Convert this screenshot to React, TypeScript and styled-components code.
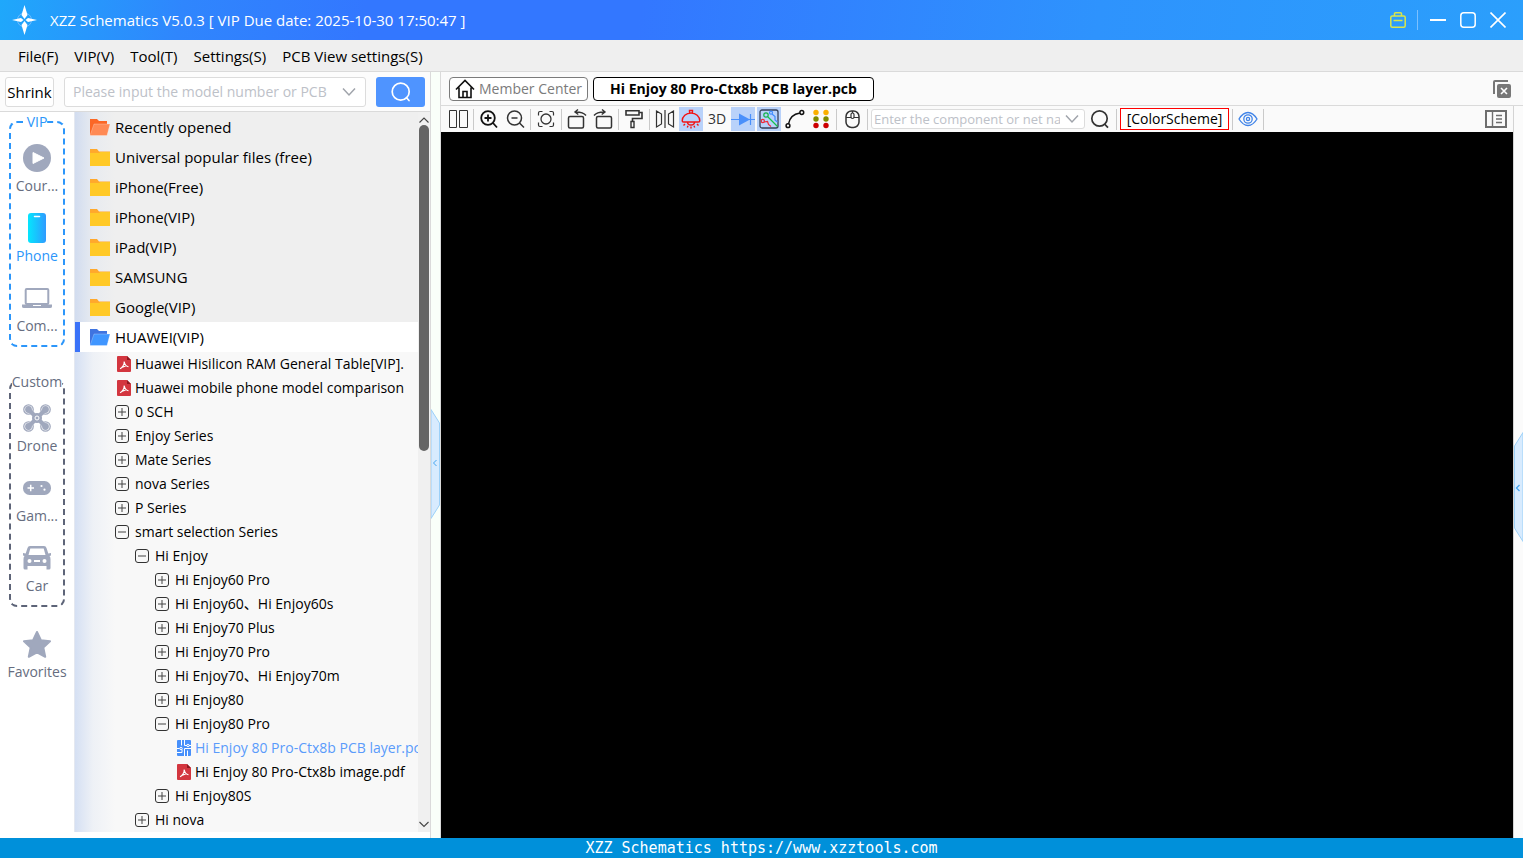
import React from "react";
import styled, { createGlobalStyle, css } from "styled-components";

const GlobalStyle = createGlobalStyle`
  * { box-sizing: border-box; }
  html, body, #root { height: 100%; }
  body {
    margin: 0;
    background: #fafafa;
    color: #000;
    font: 15px/20px "Open Sans", "Noto Sans CJK SC", sans-serif;
    overflow: hidden;
  }
  button, input { font: inherit; color: inherit; }
  button { border: 0; padding: 0; background: none; cursor: pointer; }
  svg { display: block; flex: none; }
`;

const Window = styled.div`
  display: flex;
  flex-direction: column;
  height: 100vh;
`;

/* ---------- title bar and menu ---------- */

const TitleBar = styled.header`
  display: flex;
  align-items: center;
  height: 40px;
  flex: none;
  padding: 0 13px 0 12px;
  color: #fff;
  background: linear-gradient(100deg, #1fa8fb 0%, #2f86fd 12%, #3377ff 24%, #3377ff 42%, #2e93fd 72%, #2b9ffc 100%);
`;

const Title = styled.h1`
  flex: 1;
  margin: 0 0 0 13px;
  font-size: 15px;
  font-weight: 400;
  white-space: nowrap;
`;

const WindowButtons = styled.div`
  display: flex;
  align-items: center;
  gap: 6px;
`;

const WindowButton = styled.button`
  display: grid;
  place-items: center;
  width: 24px;
  height: 24px;
`;

const TitleDivider = styled.span`
  width: 1px;
  height: 20px;
  margin: 0 2px 0 1px;
  background: #7cc0ff;
`;

const MenuBar = styled.nav`
  display: flex;
  align-items: center;
  gap: 16px;
  height: 32px;
  flex: none;
  padding: 1px 18px 0;
  background: #efefef;
  border-bottom: 1px solid #dadada;
`;

const MenuItem = styled.button`
  white-space: nowrap;
`;

/* ---------- main split ---------- */

const Main = styled.main`
  display: flex;
  flex: 1;
  min-height: 0;
`;

const LeftPanel = styled.section`
  display: flex;
  flex-direction: column;
  width: 431px;
  flex: none;
  padding-bottom: 6px;
  background: #fff;
  border-right: 1px solid #dadada;
`;

const SearchRow = styled.form`
  display: flex;
  align-items: center;
  height: 40px;
  flex: none;
  padding: 0 5px;
  background: #fcfcfc;
  border-bottom: 1px solid #dadada;
`;

const ShrinkButton = styled.button`
  width: 49px;
  height: 30px;
  background: #fff;
  border: 1px solid #dcdcdc;
  border-radius: 3px;
`;

const Combo = styled.div<{ $compact?: boolean }>`
  display: flex;
  align-items: center;
  background: #fff;
  border: 1px solid #dcdcdc;
  border-radius: 3px;
  ${(p) =>
    p.$compact
      ? css`
          width: 214px;
          height: 20px;
          padding: 0 5px 0 2px;
          font-size: 13px;
        `
      : css`
          flex: 1;
          height: 30px;
          margin: 0 10px;
          padding: 0 9px 0 8px;
          font-size: 14px;
        `}
`;

const ComboInput = styled.input`
  flex: 1;
  min-width: 0;
  height: 18px;
  padding: 0;
  border: 0;
  outline: 0;
  background: none;
  &::placeholder { color: #bdc1c8; opacity: 1; }
`;

const ComboArrow = styled.button`
  margin-left: 5px;
`;

const SearchButton = styled.button`
  display: grid;
  place-items: center;
  width: 49px;
  height: 30px;
  background: #4f94ff;
  border-radius: 3px;
`;

const Browser = styled.div`
  display: flex;
  flex: 1;
  min-height: 0;
`;

/* ---------- category rail ---------- */

const Rail = styled.aside`
  display: flex;
  flex-direction: column;
  align-items: center;
  width: 75px;
  flex: none;
  color: #666d80;
  border-right: 1px solid #e4e8f0;
  font-size: 14px;
`;

const RailGroup = styled.fieldset<{ $tone: string; $gap: number }>`
  width: 56px;
  min-width: 0;
  margin: 0 0 ${(p) => p.$gap}px;
  padding: 0;
  border: 2px dashed ${(p) => p.$tone};
  border-radius: 8px;
`;

const RailLegend = styled.legend<{ $color: string }>`
  margin: 0 auto;
  padding: 0;
  color: ${(p) => p.$color};
  white-space: nowrap;
`;

const RailList = styled.div`
  display: flex;
  flex-direction: column;
  align-items: center;
  gap: 14px;
  padding: 8px 0 9px;
`;

const RailItem = styled.button<{ $active?: boolean }>`
  display: flex;
  flex-direction: column;
  align-items: center;
  width: 52px;
  height: 56px;
  color: ${(p) => (p.$active ? "#2c96fa" : "inherit")};
  white-space: nowrap;
`;

const RailIcon = styled.span`
  display: grid;
  place-items: center;
  height: 36px;
  color: #a0a8bd;
`;

/* ---------- file tree ---------- */

const shade =
  "linear-gradient(90deg, rgba(190, 208, 240, 0.6), rgba(215, 225, 242, 0.3) 18px, rgba(240, 240, 240, 0) 40px)";

const Tree = styled.div`
  flex: 1;
  min-width: 0;
  overflow: hidden;
  background: ${shade}, #f8f8f8;
`;

const FolderRow = styled.button<{ $open?: boolean }>`
  display: flex;
  align-items: center;
  gap: 5px;
  width: 100%;
  height: 30px;
  padding-left: ${(p) => (p.$open ? 10 : 15)}px;
  background: ${(p) => (p.$open ? "#fff" : `${shade}, #efefef`)};
  border-left: ${(p) => (p.$open ? "5px solid #3a72f8" : "0")};
  white-space: nowrap;
`;

const NodeRow = styled.button<{ $level: number; $active?: boolean }>`
  display: flex;
  align-items: center;
  gap: 4px;
  width: 100%;
  height: 24px;
  padding-left: ${(p) => 40 + p.$level * 20}px;
  color: ${(p) => (p.$active ? "#5a9bfb" : "inherit")};
  font-size: 14px;
  white-space: nowrap;
`;

const NodeIcon = styled.span<{ $file: boolean }>`
  display: flex;
  justify-content: ${(p) => (p.$file ? "flex-end" : "flex-start")};
  width: 16px;
  flex: none;
`;

const ScrollBar = styled.div`
  display: flex;
  flex-direction: column;
  align-items: flex-end;
  width: 12px;
  flex: none;
  padding: 3px 1px 3px 0;
  background: #f0f0f0;
`;

const ScrollTrack = styled.div`
  flex: 1;
  width: 10px;
`;

const ScrollThumb = styled.div`
  height: 47%;
  background: #646464;
  border-radius: 5px;
`;

/* ---------- workspace ---------- */

const Gutter = styled.div<{ $shift: number }>`
  display: flex;
  align-items: center;
  width: 9px;
  flex: none;
  padding-top: ${(p) => p.$shift}px;
  background: #f9fff9;
`;

const RightGutter = styled(Gutter)`
  width: 10px;
  background: #fbfbfb;
  border-left: 1px solid #d4d4d4;
`;

const Workspace = styled.section`
  display: flex;
  flex-direction: column;
  flex: 1;
  min-width: 0;
  border-left: 1px solid #dadada;
`;

const Tabs = styled.div`
  display: flex;
  align-items: center;
  gap: 5px;
  height: 34px;
  flex: none;
  padding: 0 12px 0 8px;
  border-bottom: 1px solid #dadada;
`;

const Tab = styled.button<{ $active?: boolean }>`
  display: flex;
  align-items: center;
  gap: 4px;
  height: 24px;
  padding: ${(p) => (p.$active ? "0 16px" : "0 5px")};
  color: ${(p) => (p.$active ? "#000" : "#7b7b7b")};
  font-size: 14px;
  font-weight: ${(p) => (p.$active ? 700 : 400)};
  background: #fff;
  border: 1px solid ${(p) => (p.$active ? "#000" : "#7b7b7b")};
  border-radius: 4px;
  white-space: nowrap;
`;

const Spacer = styled.span`
  flex: 1;
`;

const View = styled.div`
  display: flex;
  flex: 1;
  min-height: 0;
`;

const ViewColumn = styled.div`
  display: flex;
  flex-direction: column;
  flex: 1;
  min-width: 0;
`;

const ToolBar = styled.div`
  display: flex;
  align-items: center;
  gap: 2px;
  height: 26px;
  flex: none;
  padding: 0 5px;
`;

const Tool = styled.button<{ $on?: boolean; $wide?: boolean }>`
  display: grid;
  place-items: center;
  width: ${(p) => (p.$wide ? 26 : 24)}px;
  height: 24px;
  flex: none;
  color: #333;
  font-size: 14px;
  background: ${(p) => (p.$on ? "#b9d2fa" : "none")};
`;

const ToolDivider = styled.span`
  width: 1px;
  height: 21px;
  margin: 0 1px;
  background: #cacaca;
`;

const SchemeButton = styled.button`
  height: 22px;
  width: 109px;
  font-size: 14px;
  background: #fff;
  border: 1px solid #f00;
  white-space: nowrap;
`;

const Board = styled.div`
  flex: 1;
  background: #000;
`;

const Footer = styled.footer`
  height: 20px;
  flex: none;
  color: #fff;
  background: #0090da;
  text-align: center;
  font: 15px/20px "DejaVu Sans Mono", monospace;
  white-space: pre;
`;

/* ---------- drawings ---------- */

const Logo = () => (
  <svg width="25" height="30" viewBox="0 0 25 30">
    <circle cx="12.5" cy="15" r="7" fill="none" stroke="#6fbcff" strokeWidth="1" />
    <path d="M12.5 0 15.5 10 12.5 14 9.5 10ZM12.5 30 15.5 20 12.5 16 9.5 20ZM0 15 9 13 11.5 15 9 17ZM25 15 16 13 13.5 15 16 17Z" fill="#fff" />
  </svg>
);

const Chevron = () => (
  <svg width="14" height="10" viewBox="0 0 14 10" fill="none" stroke="#a0a4ab" strokeWidth="1.500">
    <path d="M1 1.500 7 8 13 1.500" />
  </svg>
);

const ScrollArrow = ({ up }: { up?: boolean }) => (
  <svg width="10" height="10" viewBox="0 0 10 10" fill="none" stroke="#444" strokeWidth="1.100">
    <path d={up ? "M.500 7.500 5 3 9.500 7.500" : "M.500 3 5 7.500 9.500 3"} />
  </svg>
);

const Magnifier = () => (
  <svg width="20" height="20" viewBox="0 0 20 20" fill="none" stroke="currentColor" strokeWidth="1.700">
    <circle cx="9.500" cy="9.500" r="7.700" />
    <path d="M14.500 15 18 18.700" />
  </svg>
);

const Folder = () => (
  <svg width="20" height="17" viewBox="0 0 20 17">
    <path d="M0 0H7L9 2.500H20V8H0Z" fill="#ffa92c" />
    <path d="M0 4H9L10.500 3H20V17H0Z" fill="#ffc927" />
  </svg>
);

const OpenFolder = ({ back, front }: { back: string; front: string }) => (
  <svg width="20" height="17" viewBox="0 0 20 17">
    <path d="M0 0H7L9 2H17V8L1 16H0Z" fill={back} />
    <path d="M4 5H20L17 16.500H0Z" fill={front} stroke="#fff" strokeOpacity=".5" strokeWidth=".5" />
  </svg>
);

const Pdf = () => (
  <svg width="14" height="16" viewBox="0 0 14 16">
    <path d="M1 0H10L14 4V15Q14 16 13 16H1Q0 16 0 15V1Q0 0 1 0Z" fill="#d3363f" />
    <path d="M10 0 14 4H10Z" fill="#8d1820" />
    <path d="M7.200 5.500C7.800 8.500 9 10.500 11.500 10.700M7.200 5.500C7.400 9 5 12 3 12.700M4.700 11.400 8.700 9.900" fill="none" stroke="#fff" strokeWidth="1.100" />
  </svg>
);

const Pcb = () => (
  <svg width="14" height="16" viewBox="0 0 14 16">
    <rect width="14" height="16" rx="1" fill="#4790fb" />
    <g fill="none" stroke="#fff" strokeWidth="1">
      <path d="M4.500 0V5.500M7.500 0V5.500H10M14 5.500H12M0 8.500H2.500M5 9.500V12.500H0M7.500 16V8.500H14M10.500 16V10.500" />
      <circle cx="11" cy="5.500" r="1.200" />
      <circle cx="4" cy="8.500" r="1.200" />
    </g>
  </svg>
);

const Toggle = ({ open }: { open?: boolean }) => (
  <svg width="14" height="14" viewBox="0 0 14 14" fill="none">
    <rect x=".5" y=".5" width="13" height="13" rx="2.500" stroke="#333" />
    <path d="M3 7H11" stroke="#444" />
    {!open && <path d="M7 3V11" stroke="#444" />}
  </svg>
);

const railIcons: Record<string, React.ReactNode> = {
  course: (
    <svg width="28" height="28" viewBox="0 0 28 28">
      <circle cx="14" cy="14" r="14" fill="currentColor" />
      <path d="M10 8.500 21 14 10 19.500Z" fill="#fff" stroke="#fff" strokeLinejoin="round" />
    </svg>
  ),
  phone: (
    <svg width="18" height="30" viewBox="0 0 18 30">
      <defs>
        <linearGradient id="phone" x1="0" y1="0" x2="1" y2="0">
          <stop offset="0" stopColor="#05e6fd" />
          <stop offset="1" stopColor="#2f9bff" />
        </linearGradient>
      </defs>
      <rect width="18" height="30" rx="3" fill="url(#phone)" />
      <path d="M6.500 3.500H11.500" stroke="#fff" strokeWidth="1.500" strokeLinecap="round" />
    </svg>
  ),
  computer: (
    <svg width="30" height="20" viewBox="0 0 30 20">
      <rect x="3.700" y="1" width="22.600" height="15" rx="1" fill="none" stroke="currentColor" strokeWidth="2" />
      <path d="M0 16.500H11V18H19V16.500H30V18.500Q30 20 28 20H2Q0 20 0 18.500Z" fill="currentColor" />
    </svg>
  ),
  drone: (
    <svg width="28" height="28" viewBox="0 0 28 28" fill="none" stroke="currentColor">
      {[[5.500, 5.500], [22.500, 5.500], [5.500, 22.500], [22.500, 22.500]].map(([x, y]) => (
        <circle key={`${x}-${y}`} cx={x} cy={y} r="4.700" strokeWidth="1.300" />
      ))}
      <path d="M6 6 22 22M22 6 6 22" strokeWidth="4" strokeLinecap="round" />
      {[[5.500, 5.500], [22.500, 5.500], [5.500, 22.500], [22.500, 22.500]].map(([x, y]) => (
        <circle key={`${x}-${y}`} cx={x} cy={y} r="3.400" fill="currentColor" stroke="none" />
      ))}
      <circle cx="14" cy="14" r="4.500" fill="currentColor" />
      <circle cx="14" cy="14" r="2" stroke="#fff" />
    </svg>
  ),
  game: (
    <svg width="28" height="14" viewBox="0 0 28 14">
      <rect width="28" height="14" rx="6.500" fill="currentColor" />
      <path d="M4.500 7H11M7.700 3.700V10.300" stroke="#fff" strokeWidth="1.500" />
      <circle cx="18.500" cy="5" r="1.100" fill="#fff" />
      <circle cx="21.500" cy="8.700" r="1.100" fill="#fff" />
    </svg>
  ),
  car: (
    <svg width="28" height="24" viewBox="0 0 28 24">
      <path d="M7 0H21Q23 0 23.500 2L25.300 7.500 28 7V9.500L26.500 10Q27.500 11 27.500 13V22Q27.500 23.500 26 23.500H23.500V20H4.500V23.500H2Q.500 23.500 .500 22V13Q.500 11 1.500 10L0 9.500V7L2.700 7.500 4.500 2Q5 0 7 0ZM7.300 2.500 5.500 9H22.500L20.700 2.500Z" fill="currentColor" />
      <circle cx="6.500" cy="15" r="2" fill="#fff" />
      <circle cx="21.500" cy="15" r="2" fill="#fff" />
      <rect x="11" y="14" width="6" height="2" fill="#fff" />
    </svg>
  ),
  star: (
    <svg width="28" height="27" viewBox="0 0 28 27">
      <path d="M14 1 17.900 9.300 27 10.300 20.300 16.500 22.200 25.800 14 21.300 5.800 25.800 7.700 16.500 1 10.300 10.100 9.300Z" fill="currentColor" stroke="currentColor" strokeWidth="2" strokeLinejoin="round" />
    </svg>
  ),
};

const Glyph = ({ children }: { children: React.ReactNode }) => (
  <svg width="20" height="20" viewBox="0 0 20 20" fill="none" stroke="currentColor" strokeWidth="1.500">
    {children}
  </svg>
);

const glyphs: Record<string, React.ReactNode> = {
  split: (
    <Glyph>
      <path d="M1.500 1.500H8.500V18.500H1.500ZM11.500 1.500H19.500V18.500H11.500Z" strokeWidth="1" />
    </Glyph>
  ),
  zoomIn: (
    <Glyph>
      <g stroke="#111" strokeWidth="1.800">
        <circle cx="9" cy="9" r="6.800" />
        <path d="M14 14 18 18.500M5.500 9H12.500M9 5.500V12.500" />
      </g>
    </Glyph>
  ),
  zoomOut: (
    <Glyph>
      <circle cx="9.500" cy="9" r="7" />
      <path d="M14.500 14 19 18.500M6.500 9H12.500" />
    </Glyph>
  ),
  fit: (
    <Glyph>
      <path d="M2.500 6.500V4Q2.500 2.500 4 2.500H6.500M13.500 2.500H16Q17.500 2.500 17.500 4V6.500M17.500 13.500V16Q17.500 17.500 16 17.500H13.500M6.500 17.500H4Q2.500 17.500 2.500 16V13.500" strokeWidth="1.200" />
      <circle cx="10" cy="10" r="5" strokeWidth="1.300" />
    </Glyph>
  ),
  rotateLeft: (
    <Glyph>
      <rect x="1.500" y="7.500" width="15" height="11.500" rx="1.500" />
      <path d="M19 6.500Q16 2.700 8 3M11 .500 8 3 11.300 5.500" strokeWidth="1.400" />
    </Glyph>
  ),
  rotateRight: (
    <Glyph>
      <rect x="3.500" y="7.500" width="15" height="11.500" rx="1.500" />
      <path d="M1 6.500Q4 2.700 12 3M9 .500 12 3 8.700 5.500" strokeWidth="1.400" />
    </Glyph>
  ),
  roller: (
    <Glyph>
      <path d="M2 1.700H15V6H2ZM15 3.500H18V9.500H8.500V12" strokeWidth="1.600" />
      <path d="M7 12.500H10V18.500H7Z" strokeWidth="1.400" />
    </Glyph>
  ),
  mirror: (
    <Glyph>
      <path d="M1.500 2 6.500 5V15L1.500 18ZM18.500 2 13.500 5V15L18.500 18ZM10 1V19" strokeWidth="1.200" />
    </Glyph>
  ),
  lamp: (
    <Glyph>
      <g stroke="#f21313" strokeWidth="1.400">
        <path d="M1.200 12A8.800 8 0 0 1 18.800 12Q18.500 13 17 13H3Q1.500 13 1.200 12ZM8.500 4V1.500H11.500V4M6.500 13A3.500 3 0 0 0 13.500 13M4 15 2.500 16.500M7 16.800 6.300 18.500M10 17.500V19.500M13 16.800 13.700 18.500M16 15 17.500 16.500" />
      </g>
    </Glyph>
  ),
  diode: (
    <svg width="24" height="20" viewBox="0 0 24 20" fill="#4a90fb" stroke="#4a90fb">
      <path d="M0 10.500H24M19.500 5V16" fill="none" strokeWidth="1.200" />
      <path d="M8 4.500 19 10.500 8 16.500Z" stroke="none" />
    </svg>
  ),
  net: (
    <Glyph>
      <rect x="1" y="1" width="18" height="18" rx="2" stroke="#35405a" strokeWidth="1.300" />
      <g strokeWidth="1.200">
        <circle cx="7" cy="6" r="2.200" stroke="#16b14b" />
        <path d="M8.500 7.500 18.500 17.500" stroke="#16c14b" />
        <path d="M13 5 16 7.500V11L18.500 13" stroke="#3f8cff" />
        <circle cx="12" cy="3.700" r="1.500" stroke="#3f8cff" />
        <path d="M5 13 8.500 12.500 9.500 15.500 12 17.500" stroke="#f02a3a" />
        <circle cx="3.800" cy="12" r="1.600" stroke="#f02a3a" />
      </g>
    </Glyph>
  ),
  curve: (
    <Glyph>
      <path d="M3.500 15Q5 5.500 15 4" stroke="#111" />
      <circle cx="3" cy="16.700" r="1.900" stroke="#111" fill="#fff" />
      <circle cx="16.800" cy="3.500" r="1.900" stroke="#111" fill="#fff" />
    </Glyph>
  ),
  dots: (
    <svg width="20" height="20" viewBox="0 0 20 20">
      {["#fbb000", "#7f8c00", "#cc0000"].map((c, i) => (
        <g key={c} fill={c}>
          <circle cx="5" cy={3.500 + i * 6.500} r="2.700" />
          <circle cx="15" cy={3.500 + i * 6.500} r="2.700" />
        </g>
      ))}
    </svg>
  ),
  mouse: (
    <Glyph>
      <rect x="4" y="2" width="13" height="16.500" rx="5.500" />
      <path d="M4 8.500H17M10.500 2V4" strokeWidth="1.200" />
      <rect x="9" y="4" width="3" height="5.500" rx="1.500" fill="#fff" strokeWidth="1.200" />
    </Glyph>
  ),
  eye: (
    <Glyph>
      <g stroke="#3f83e8" strokeWidth="1.300">
        <path d="M1 10Q5 3.500 10 3.500T19 10Q15 16.500 10 16.500T1 10Z" />
        <circle cx="10" cy="10" r="4.200" />
        <circle cx="10" cy="10" r="1.600" />
      </g>
    </Glyph>
  ),
  panel: (
    <svg width="22" height="18" viewBox="0 0 22 18" fill="none" stroke="#6e6e6e">
      <rect x="1" y="1" width="20" height="16" strokeWidth="2" />
      <path d="M7.500 1V17" strokeWidth="1.400" />
      <path d="M11 5.500H17M11 9H17M11 12.500H17" strokeWidth="1.400" />
    </svg>
  ),
};

const CollapseLeft = () => (
  <svg width="9" height="110" viewBox="0 0 9 110">
    <path d="M0 .500 8.500 14V96L0 109.500Z" fill="#d8ebfe" stroke="#9bd0f8" />
    <path d="M5.500 51 2.500 54 5.500 57" fill="none" stroke="#45a5f0" />
  </svg>
);

const CollapseRight = () => (
  <svg width="9" height="110" viewBox="0 0 9 110">
    <path d="M9 .500 .500 14V96L9 109.500Z" fill="#d8ebfe" stroke="#9bd0f8" />
    <path d="M5.500 53 2.500 56 5.500 59" fill="none" stroke="#45a5f0" strokeWidth="1.300" />
  </svg>
);

/* ---------- data ---------- */

const menus = ["File(F)", "VIP(V)", "Tool(T)", "Settings(S)", "PCB View settings(S)"];

const folders = [
  "Universal popular files (free)",
  "iPhone(Free)",
  "iPhone(VIP)",
  "iPad(VIP)",
  "SAMSUNG",
  "Google(VIP)",
];

type Node = { kind: "plus" | "minus" | "pdf" | "pcb"; level: number; label: string };

const nodes: Node[] = [
  { kind: "pdf", level: 0, label: "Huawei Hisilicon RAM General Table[VIP]." },
  { kind: "pdf", level: 0, label: "Huawei mobile phone model comparison" },
  { kind: "plus", level: 0, label: "0 SCH" },
  { kind: "plus", level: 0, label: "Enjoy Series" },
  { kind: "plus", level: 0, label: "Mate Series" },
  { kind: "plus", level: 0, label: "nova Series" },
  { kind: "plus", level: 0, label: "P Series" },
  { kind: "minus", level: 0, label: "smart selection Series" },
  { kind: "minus", level: 1, label: "Hi Enjoy" },
  { kind: "plus", level: 2, label: "Hi Enjoy60 Pro" },
  { kind: "plus", level: 2, label: "Hi Enjoy60、Hi Enjoy60s" },
  { kind: "plus", level: 2, label: "Hi Enjoy70 Plus" },
  { kind: "plus", level: 2, label: "Hi Enjoy70 Pro" },
  { kind: "plus", level: 2, label: "Hi Enjoy70、Hi Enjoy70m" },
  { kind: "plus", level: 2, label: "Hi Enjoy80" },
  { kind: "minus", level: 2, label: "Hi Enjoy80 Pro" },
  { kind: "pcb", level: 3, label: "Hi Enjoy 80 Pro-Ctx8b PCB layer.pcb" },
  { kind: "pdf", level: 3, label: "Hi Enjoy 80 Pro-Ctx8b image.pdf" },
  { kind: "plus", level: 2, label: "Hi Enjoy80S" },
  { kind: "plus", level: 1, label: "Hi nova" },
];

const toolGroups: { name: string; label: string; on?: boolean }[][] = [
  [{ name: "split", label: "Split view" }],
  [{ name: "zoomIn", label: "Zoom in" }, { name: "zoomOut", label: "Zoom out" }],
  [{ name: "fit", label: "Fit" }],
  [{ name: "rotateLeft", label: "Rotate left" }, { name: "rotateRight", label: "Rotate right" }],
  [{ name: "roller", label: "Paint" }],
  [
    { name: "mirror", label: "Mirror" },
    { name: "lamp", label: "Highlight", on: true },
    { name: "3D", label: "3D" },
    { name: "diode", label: "Diode values", on: true },
    { name: "net", label: "Nets", on: true },
    { name: "curve", label: "Trace" },
    { name: "dots", label: "Pads" },
  ],
  [{ name: "mouse", label: "Mouse" }],
];

const RailEntry = ({ icon, label, active }: { icon: string; label: string; active?: boolean }) => (
  <RailItem type="button" $active={active}>
    <RailIcon>{railIcons[icon]}</RailIcon>
    {label}
  </RailItem>
);

const nodeIcon = (kind: Node["kind"]) => {
  if (kind === "pdf") return <Pdf />;
  if (kind === "pcb") return <Pcb />;
  return <Toggle open={kind === "minus"} />;
};

export default function App() {
  return (
    <Window>
      <GlobalStyle />
      <TitleBar>
        <Logo />
        <Title>XZZ Schematics V5.0.3 [ VIP Due date: 2025-10-30 17:50:47 ]</Title>
        <WindowButtons>
          <WindowButton aria-label="License">
            <svg width="16" height="16" viewBox="0 0 16 16" fill="none" stroke="#d9e64a" strokeWidth="1.500">
              <rect x=".800" y="4" width="14.400" height="11.200" rx="1.500" />
              <path d="M4.500 4V1.700Q4.500 .800 5.500 .800H10.500Q11.500 .800 11.500 1.700V4M3.500 8.500H12.500" />
            </svg>
          </WindowButton>
          <TitleDivider />
          <WindowButton aria-label="Minimize">
            <svg width="16" height="16" viewBox="0 0 16 16"><path d="M0 8H16" stroke="#fff" strokeWidth="2" /></svg>
          </WindowButton>
          <WindowButton aria-label="Maximize">
            <svg width="16" height="16" viewBox="0 0 16 16"><rect x=".800" y=".800" width="14.400" height="14.400" rx="3" fill="none" stroke="#fff" strokeWidth="1.500" /></svg>
          </WindowButton>
          <WindowButton aria-label="Close">
            <svg width="16" height="16" viewBox="0 0 16 16"><path d="M.500 .500 15.500 15.500M15.500 .500 .500 15.500" stroke="#fff" strokeWidth="1.600" /></svg>
          </WindowButton>
        </WindowButtons>
      </TitleBar>

      <MenuBar>
        {menus.map((m) => (
          <MenuItem key={m}>{m}</MenuItem>
        ))}
      </MenuBar>

      <Main>
        <LeftPanel>
          <SearchRow>
            <ShrinkButton type="button">Shrink</ShrinkButton>
            <Combo>
              <ComboInput aria-label="Model search" placeholder="Please input the model number or PCB" />
              <ComboArrow type="button" aria-label="Show history">
                <Chevron />
              </ComboArrow>
            </Combo>
            <SearchButton type="button" aria-label="Search">
              <svg width="20" height="20" viewBox="0 0 20 20" fill="none" stroke="#fff" strokeWidth="1.700">
                <circle cx="9.700" cy="9.700" r="8.500" />
                <path d="M15.500 15.700 18 18.500" strokeLinecap="round" />
              </svg>
            </SearchButton>
          </SearchRow>

          <Browser>
            <Rail>
              <RailGroup $tone="#2c96fa" $gap={25}>
                <RailLegend $color="#2c96fa">VIP</RailLegend>
                <RailList>
                  <RailEntry icon="course" label="Cour..." />
                  <RailEntry icon="phone" label="Phone" active />
                  <RailEntry icon="computer" label="Com..." />
                </RailList>
              </RailGroup>
              <RailGroup $tone="#5d6478" $gap={19}>
                <RailLegend $color="#666d80">Custom</RailLegend>
                <RailList>
                  <RailEntry icon="drone" label="Drone" />
                  <RailEntry icon="game" label="Gam..." />
                  <RailEntry icon="car" label="Car" />
                </RailList>
              </RailGroup>
              <RailEntry icon="star" label="Favorites" />
            </Rail>

            <Tree>
              <FolderRow>
                <OpenFolder back="#fb6726" front="#ff8a55" />
                Recently opened
              </FolderRow>
              {folders.map((f) => (
                <FolderRow key={f}>
                  <Folder />
                  {f}
                </FolderRow>
              ))}
              <FolderRow $open>
                <OpenFolder back="#3f74e0" front="#4096ff" />
                HUAWEI(VIP)
              </FolderRow>
              {nodes.map((n) => (
                <NodeRow key={n.label} $level={n.level} $active={n.kind === "pcb"}>
                  <NodeIcon $file={n.kind === "pdf" || n.kind === "pcb"}>{nodeIcon(n.kind)}</NodeIcon>
                  {n.label}
                </NodeRow>
              ))}
            </Tree>
            <ScrollBar>
              <ScrollArrow up />
              <ScrollTrack>
                <ScrollThumb />
              </ScrollTrack>
              <ScrollArrow />
            </ScrollBar>
          </Browser>
        </LeftPanel>

        <Gutter $shift={18}>
          <CollapseLeft />
        </Gutter>

        <Workspace>
          <Tabs>
            <Tab>
              <svg width="20" height="20" viewBox="0 0 20 20" fill="none" stroke="#111" strokeWidth="1.600">
                <path d="M1 10.500 10 1.500 19 10.500M4 8.500V18.500H16V8.500M8 18.500V12.500H12V18.500" />
              </svg>
              Member Center
            </Tab>
            <Tab $active>Hi Enjoy 80 Pro-Ctx8b PCB layer.pcb</Tab>
            <Spacer />
            <button aria-label="Close all">
              <svg width="18" height="18" viewBox="0 0 18 18">
                <path d="M1 14V2Q1 1 2 1H15" fill="none" stroke="#777" strokeWidth="2" />
                <rect x="4" y="4" width="14" height="14" rx="2" fill="#777" />
                <path d="M8 8 14 14M14 8 8 14" stroke="#fff" strokeWidth="1.600" />
              </svg>
            </button>
          </Tabs>
          <View>
            <ViewColumn>
              <ToolBar>
                {toolGroups.map((group, i) => (
                  <React.Fragment key={i}>
                    {group.map((t) => (
                      <Tool key={t.name} $on={t.on} aria-label={t.label}>
                        {glyphs[t.name] ?? t.name}
                      </Tool>
                    ))}
                    <ToolDivider />
                  </React.Fragment>
                ))}
                <Combo $compact>
                  <ComboInput aria-label="Component search" placeholder="Enter the component or net name" />
                  <ComboArrow type="button" aria-label="Show history">
                    <Chevron />
                  </ComboArrow>
                </Combo>
                <Tool $wide aria-label="Find">
                  <Magnifier />
                </Tool>
                <ToolDivider />
                <SchemeButton>[ColorScheme]</SchemeButton>
                <ToolDivider />
                <Tool aria-label="Visibility">{glyphs.eye}</Tool>
                <ToolDivider />
                <Spacer />
                <Tool aria-label="Side panel">{glyphs.panel}</Tool>
              </ToolBar>
              <Board />
            </ViewColumn>
            <RightGutter $shift={30}>
              <CollapseRight />
            </RightGutter>
          </View>
        </Workspace>
      </Main>

      <Footer>XZZ Schematics https://www.xzztools.com</Footer>
    </Window>
  );
}
